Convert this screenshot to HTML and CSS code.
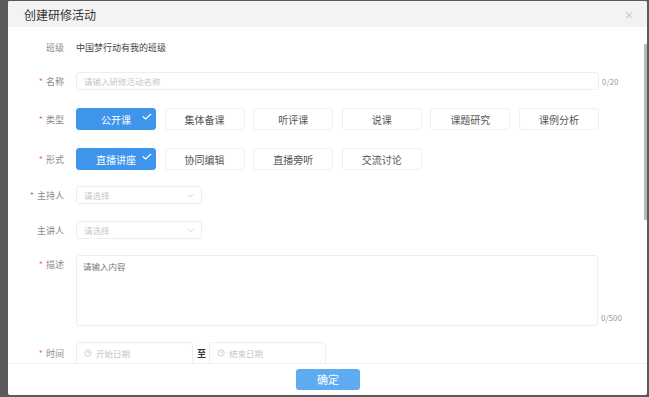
FILE: index.html
```html
<!DOCTYPE html>
<html lang="zh-CN">
<head>
  <meta charset="UTF-8" />
  <meta name="viewport" content="width=device-width, initial-scale=1.0" />
  <title>创建研修活动</title>
  <link rel="stylesheet" href="styles.css">
</head>
<body>
  <div class="dialog">
    <header class="dlg-head">
      <span class="dlg-title">创建研修活动</span>
      <span class="dlg-close">×</span>
    </header>

    <section class="dlg-body">
      <div class="row r-class">
        <label class="lbl">班级</label>
        <div class="val">中国梦行动有我的班级</div>
      </div>

      <div class="row r-name">
        <label class="lbl req">名称</label>
        <div class="ctl">
          <div class="input wide"><span class="ph">请输入研修活动名称</span></div>
          <span class="count">0/20</span>
        </div>
      </div>

      <div class="row r-opt">
        <label class="lbl req">类型</label>
        <div class="opts">
          <span class="opt on">公开课<svg class="tick" viewBox="0 0 12 8"><path d="M1 4l3.2 3L11 1" /></svg></span>
          <span class="opt">集体备课</span>
          <span class="opt">听评课</span>
          <span class="opt">说课</span>
          <span class="opt">课题研究</span>
          <span class="opt">课例分析</span>
        </div>
      </div>

      <div class="row r-opt">
        <label class="lbl req">形式</label>
        <div class="opts">
          <span class="opt on">直播讲座<svg class="tick" viewBox="0 0 12 8"><path d="M1 4l3.2 3L11 1" /></svg></span>
          <span class="opt">协同编辑</span>
          <span class="opt">直播旁听</span>
          <span class="opt">交流讨论</span>
        </div>
      </div>

      <div class="row r-sel">
        <label class="lbl req">主持人</label>
        <div class="input select"><span class="ph">请选择</span>
          <svg class="arrow" viewBox="0 0 10 6"><path d="M1 1l4 4 4-4" /></svg></div>
      </div>

      <div class="row r-sel2">
        <label class="lbl">主讲人</label>
        <div class="input select"><span class="ph">请选择</span>
          <svg class="arrow" viewBox="0 0 10 6"><path d="M1 1l4 4 4-4" /></svg></div>
      </div>

      <div class="row r-desc">
        <label class="lbl req">描述</label>
        <div class="ctl">
          <div class="textarea"><span class="ph dark">请输入内容</span></div>
          <span class="count">0/500</span>
        </div>
      </div>

      <div class="row r-time">
        <label class="lbl req">时间</label>
        <div class="dates">
          <div class="input date">
            <svg class="clock" viewBox="0 0 10 10"><circle cx="5" cy="5" r="4" /><path d="M5 2.6V5h2" /></svg>
            <span class="ph">开始日期</span>
          </div>
          <span class="to">至</span>
          <div class="input date">
            <svg class="clock" viewBox="0 0 10 10"><circle cx="5" cy="5" r="4" /><path d="M5 2.6V5h2" /></svg>
            <span class="ph">结束日期</span>
          </div>
        </div>
      </div>

      <div class="scroll"><div class="thumb"></div></div>
    </section>

    <footer class="dlg-foot">
      <button class="ok">确定</button>
    </footer>
  </div>
</body>
</html>
```

FILE: styles.css
```css
html, body { margin: 0; height: 100%; }
body {
  background: #5a5a5a; overflow: hidden;
  font-family: "Noto Sans CJK SC", "Noto Sans", sans-serif;
}

.dialog {
  margin: 1px 0 0 8px; width: 639px; height: 394px;
  background: #fff; border-radius: 2px;
  display: flex; flex-direction: column; overflow: hidden;
}

/* header */
.dlg-head {
  height: 26px; background: #f3f3f3; flex: none;
  display: flex; align-items: center; justify-content: space-between;
  padding: 0 16px;
}
.dlg-title { font-size: 12px; color: #333; }
.dlg-close { font-size: 10px; color: #bbb; margin-right: -3px; }

/* body */
.dlg-body {
  flex: 1; overflow: hidden; position: relative;
  padding-top: 11px;
}

.row { display: flex; align-items: center; }
.lbl {
  width: 56px; flex: none; text-align: right; margin-right: 12px;
  font-size: 9px; color: #8a8a8a;
}
.req::before { content: "*"; color: #f56c6c; margin-right: 3px; }

.r-class { height: 18px; }
.r-name  { margin-top: 16px; }
.r-opt   { margin-top: 18px; }
.r-sel   { margin-top: 16px; }
.r-sel2  { margin-top: 17px; }
.r-desc  { margin-top: 16px; align-items: flex-start; }
.r-desc .lbl { margin-top: 3px; }
.r-time  { margin-top: 16px; align-items: flex-start; }
.r-time .lbl { margin-top: 5px; }

.val { font-size: 9px; color: #444; }

.ctl { display: flex; align-items: center; }
.r-desc .ctl { align-items: flex-end; }
.count { font-size: 8px; color: #999; margin-left: 3px; }
.r-desc .count { margin-left: 3px; margin-bottom: 3px; }

.input {
  height: 18px; box-sizing: border-box;
  border: 1px solid #ebeef3; border-radius: 3px;
  display: flex; align-items: center; padding: 0 7px;
  position: relative;
}
.input.wide { width: 523px; }
.ph { font-size: 8.5px; color: #c3c6cc; }
.ph.dark { color: #777; }

.select { width: 126px; justify-content: space-between; }
.arrow { width: 7px; height: 5px; fill: none; stroke: #c0c4cc; stroke-width: 1; }

.textarea {
  width: 522px; height: 71px; box-sizing: border-box;
  border: 1px solid #ebeef3; border-radius: 3px; padding: 1px 6px;
  line-height: 12px;
}

/* option buttons */
.opts { display: flex; gap: 8.6px; }
.opt {
  width: 80px; height: 22px; box-sizing: border-box;
  border: 1px solid #eef0f4; border-radius: 3px;
  display: flex; align-items: center; justify-content: center;
  font-size: 10px; color: #555; position: relative;
}
.opt.on { background: #3f95ec; border-color: #3f95ec; color: #fff; }
.tick {
  position: absolute; top: 4px; right: 3px; width: 10px; height: 7px;
  fill: none; stroke: #fff; stroke-width: 1.4;
}

/* dates */
.dates { display: flex; align-items: flex-start; }
.date { width: 117px; height: 30px; align-items: flex-start; padding-top: 6px; }
.date .ph { margin-left: 4px; line-height: 9px; }
.clock { width: 8px; height: 8px; fill: none; stroke: #c0c4cc; stroke-width: 1; }
.to { font-size: 9px; color: #333; font-weight: bold; margin: 5px 3px 0 4px; }

/* scrollbar */
.scroll { position: absolute; right: 0; top: 0; bottom: 0; width: 3px; }
.thumb { margin-top: 17px; height: 176px; background: #b8b8b8; border-radius: 1px; }

/* footer */
.dlg-foot {
  height: 31px; flex: none; border-top: 1px solid #eef0f3;
  display: flex; align-items: center; justify-content: center;
}
.ok {
  width: 64px; height: 21px; border: none; border-radius: 3px;
  background: #5eabf2; color: #fff; font-size: 11px;
  font-family: inherit; margin-left: 1px; margin-top: -1px;
}
```
